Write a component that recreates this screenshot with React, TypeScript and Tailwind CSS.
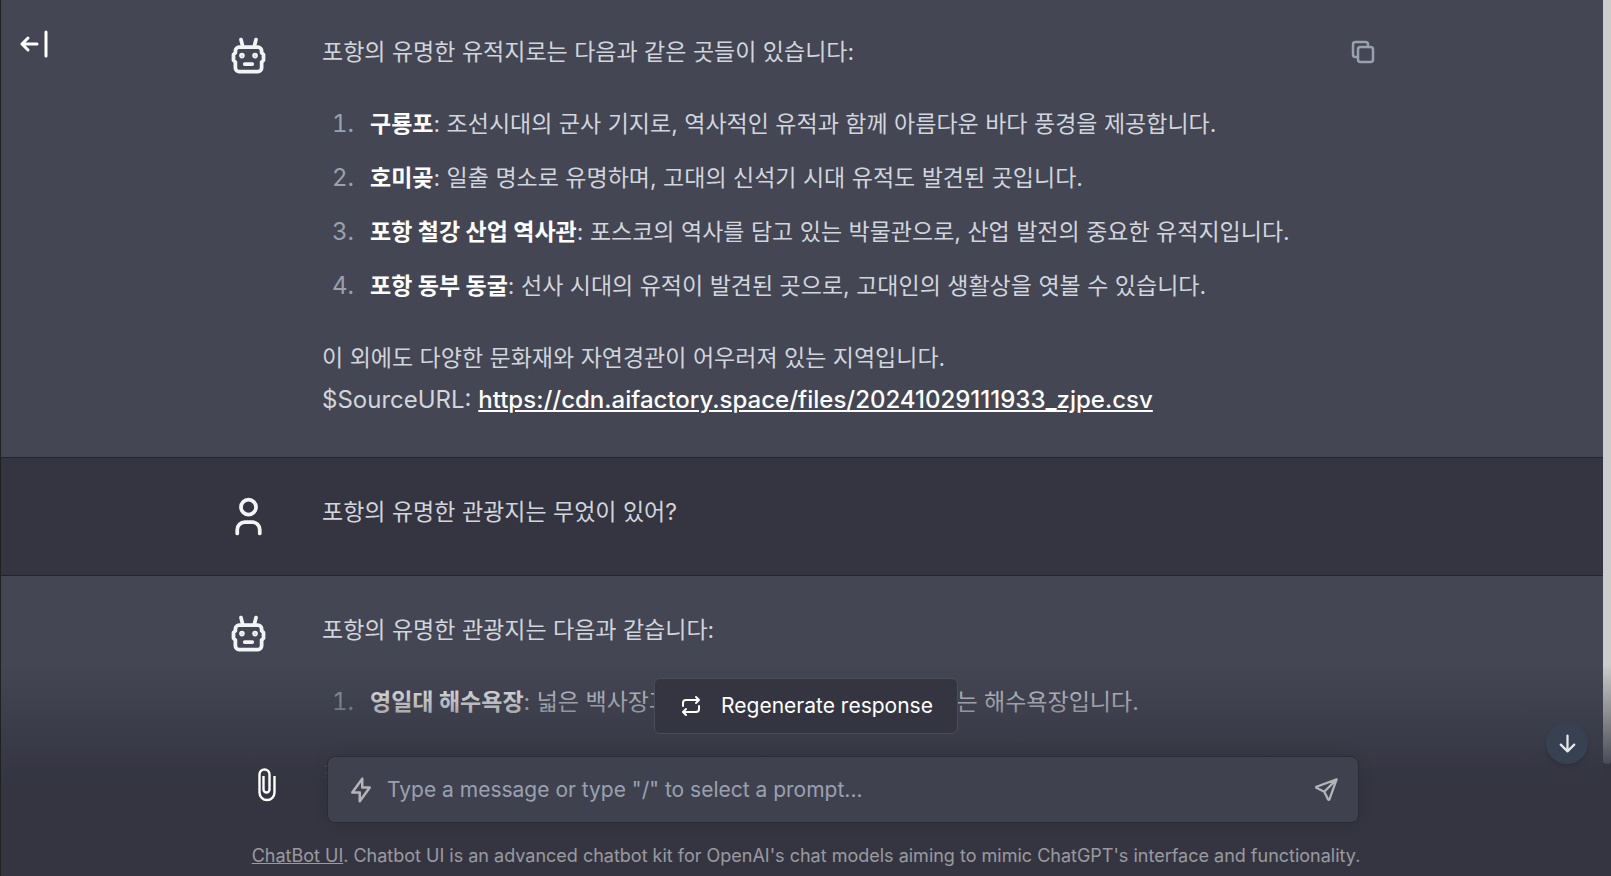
import React from "react";

type IconProps = { className?: string; children: React.ReactNode };

const Icon = ({ className = "size-6", children }: IconProps) => (
    <svg
        className={className}
        viewBox="0 0 24 24"
        fill="none"
        stroke="currentColor"
        strokeWidth={2}
        strokeLinecap="round"
        strokeLinejoin="round"
        aria-hidden="true"
    >
        {children}
    </svg>
);

const RobotIcon = () => (
    <Icon className="size-[45px]">
        <path d="M7 7h10a2 2 0 0 1 2 2v1l1 1v3l-1 1v3a2 2 0 0 1-2 2H7a2 2 0 0 1-2-2v-3l-1-1v-3l1-1V9a2 2 0 0 1 2-2z" />
        <path d="M10 16h4M9 7L8 3M15 7l1-4" />
        <circle cx="8.5" cy="11.5" r=".5" fill="currentColor" />
        <circle cx="15.5" cy="11.5" r=".5" fill="currentColor" />
    </Icon>
);

const UserIcon = () => (
    <Icon className="size-[45px]">
        <circle cx="12" cy="7" r="4" />
        <path d="M6 21v-2a4 4 0 0 1 4-4h4a4 4 0 0 1 4 4v2" />
    </Icon>
);

type MessageProps = { role: "assistant" | "user"; copy?: boolean; children: React.ReactNode };

const Message = ({ role, copy, children }: MessageProps) => (
    <article
        className={
            role === "assistant"
                ? "border-b border-[#23242f] bg-[#444654] text-gray-100"
                : "border-b border-[#23242f] bg-[#343541] text-gray-100"
        }
    >
        <div className="mx-auto flex w-full max-w-[1152px] pt-[33px] pb-9">
            <div className="w-24 shrink-0 pt-[3px]">
                {role === "assistant" ? <RobotIcon /> : <UserIcon />}
            </div>
            <div className="min-w-0 flex-1 text-[23px] leading-[42px] text-gray-300">{children}</div>
            {copy && (
                <button type="button" aria-label="Copy message" className="mt-1.5 size-[30px] text-gray-400">
                    <Icon className="size-[30px]">
                        <rect x="8" y="8" width="12" height="12" rx="2" />
                        <path d="M16 8V6a2 2 0 0 0-2-2H6a2 2 0 0 0-2 2v8a2 2 0 0 0 2 2h2" />
                    </Icon>
                </button>
            )}
        </div>
    </article>
);

type Place = { name: string; text: string };

const PlaceList = ({ places }: { places: Place[] }) => (
    <ol className="my-[30px] space-y-3">
        {places.map((place, i) => (
            <li key={place.name} className="flex">
                <span className="mr-4 w-8 shrink-0 text-right text-2xl leading-[42px] text-gray-400 tabular-nums">
                    {i + 1}.
                </span>
                <p>
                    <strong className="font-bold text-white">{place.name}</strong>: {place.text}
                </p>
            </li>
        ))}
    </ol>
);

const heritage: Place[] = [
    { name: "구룡포", text: "조선시대의 군사 기지로, 역사적인 유적과 함께 아름다운 바다 풍경을 제공합니다." },
    { name: "호미곶", text: "일출 명소로 유명하며, 고대의 신석기 시대 유적도 발견된 곳입니다." },
    { name: "포항 철강 산업 역사관", text: "포스코의 역사를 담고 있는 박물관으로, 산업 발전의 중요한 유적지입니다." },
    { name: "포항 동부 동굴", text: "선사 시대의 유적이 발견된 곳으로, 고대인의 생활상을 엿볼 수 있습니다." },
];

const attractions: Place[] = [
    { name: "영일대 해수욕장", text: "넓은 백사장과 아름다운 야경을 감상할 수 있는 해수욕장입니다." },
];

const App = () => {
    return (
        <main className="relative flex h-screen flex-col overflow-hidden border-l border-[#202123] bg-[#343541] font-['Inter','Noto_Sans_CJK_KR',sans-serif]">
            <div className="flex min-h-0 flex-1">
                <div className="min-w-0 flex-1 overflow-hidden bg-[#444654]">
                    <div className="-mt-0.5">
                        <Message role="assistant" copy>
                            <p>포항의 유명한 유적지로는 다음과 같은 곳들이 있습니다:</p>
                            <PlaceList places={heritage} />
                            <p>이 외에도 다양한 문화재와 자연경관이 어우러져 있는 지역입니다.</p>
                            <p className="text-2xl leading-[42px]">
                                $SourceURL:{" "}
                                <a
                                    href="https://cdn.aifactory.space/files/20241029111933_zjpe.csv"
                                    className="font-medium text-white underline"
                                >
                                    https://cdn.aifactory.space/files/20241029111933_zjpe.csv
                                </a>
                            </p>
                        </Message>
                        <Message role="user">
                            <p>포항의 유명한 관광지는 무었이 있어?</p>
                        </Message>
                        <Message role="assistant">
                            <p>포항의 유명한 관광지는 다음과 같습니다:</p>
                            <PlaceList places={attractions} />
                            <p>추가</p>
                        </Message>
                    </div>
                </div>
                {/* scrollbar */}
                <div className="w-2 shrink-0 pb-28">
                    <div className="h-full rounded-b-full bg-[#cdcdcd]" />
                </div>
            </div>

            <button type="button" aria-label="Show sidebar" className="absolute top-[26px] left-[15px] text-white">
                <Icon className="size-9">
                    <path d="M4 12h10M4 12l4 4M4 12l4-4M20 4v16" />
                </Icon>
            </button>

            <footer className="absolute inset-x-0 bottom-0 bg-linear-to-b from-transparent via-[#343541] via-55% to-[#343541] pt-3.5">
                <div className="mx-auto flex max-w-[1110px] flex-col">
                    <button
                        type="button"
                        className="flex h-14 items-center gap-[18px] self-center rounded-md border border-[#4c4d58] bg-[#343541] px-6 text-[21px] text-white"
                    >
                        <Icon>
                            <path d="M4 12V9a3 3 0 0 1 3-3h13m-3-3l3 3l-3 3M20 12v3a3 3 0 0 1-3 3H4m3 3l-3-3l3-3" />
                        </Icon>
                        Regenerate response
                    </button>
                    <div className="mt-[22px] flex items-start px-0.5">
                        <button type="button" aria-label="Attach file" className="w-[74px] pt-[11px] pl-1 text-white">
                            <svg
                                className="h-9 w-5"
                                viewBox="0 0 20 36"
                                fill="none"
                                stroke="currentColor"
                                strokeWidth={2.4}
                                aria-hidden="true"
                            >
                                <path d="M17.500 9v16.500a7.500 7.500 0 0 1-15 0V7.500a5 5 0 0 1 10 0v15a3 3 0 0 1-6 0V9" />
                            </svg>
                        </button>
                        <div className="flex h-[67px] flex-1 items-center rounded-lg border border-[#2b2c37] bg-[#40414f] px-[18px] text-[#b3b4ba] shadow-[0_0_15px_rgba(0,0,0,0.1)]">
                            <Icon className="size-[30px]">
                                <path d="M13 3v7h6l-8 11v-7H5l8-11" />
                            </Icon>
                            <input
                                type="text"
                                aria-label="Message"
                                placeholder={'Type a message or type "/" to select a prompt...'}
                                className="mx-[11px] min-w-0 flex-1 bg-transparent text-[21px] text-white outline-none placeholder:text-gray-400"
                            />
                            <button type="button" aria-label="Send message">
                                <Icon className="size-[27px]">
                                    <path d="M10 14L21 3M21 3l-6.500 18a.55.55 0 0 1-1 0L10 14l-7-3.500a.55.55 0 0 1 0-1L21 3" />
                                </Icon>
                            </button>
                        </div>
                    </div>
                    <p className="pt-[19px] pb-1.5 text-center text-lg text-white/50">
                        <a href="#" className="underline">
                            ChatBot UI
                        </a>
                        . Chatbot UI is an advanced chatbot kit for OpenAI's chat models aiming to mimic ChatGPT's
                        interface and functionality.
                    </p>
                </div>
            </footer>

            <button
                type="button"
                aria-label="Scroll to bottom"
                className="absolute right-[23px] bottom-28 flex size-[42px] items-center justify-center rounded-full bg-[#374151] text-gray-200 shadow-md"
            >
                <Icon className="size-[27px]">
                    <path d="M12 5v14M18 13l-6 6M6 13l6 6" />
                </Icon>
            </button>
        </main>
    );
};

export default App;
